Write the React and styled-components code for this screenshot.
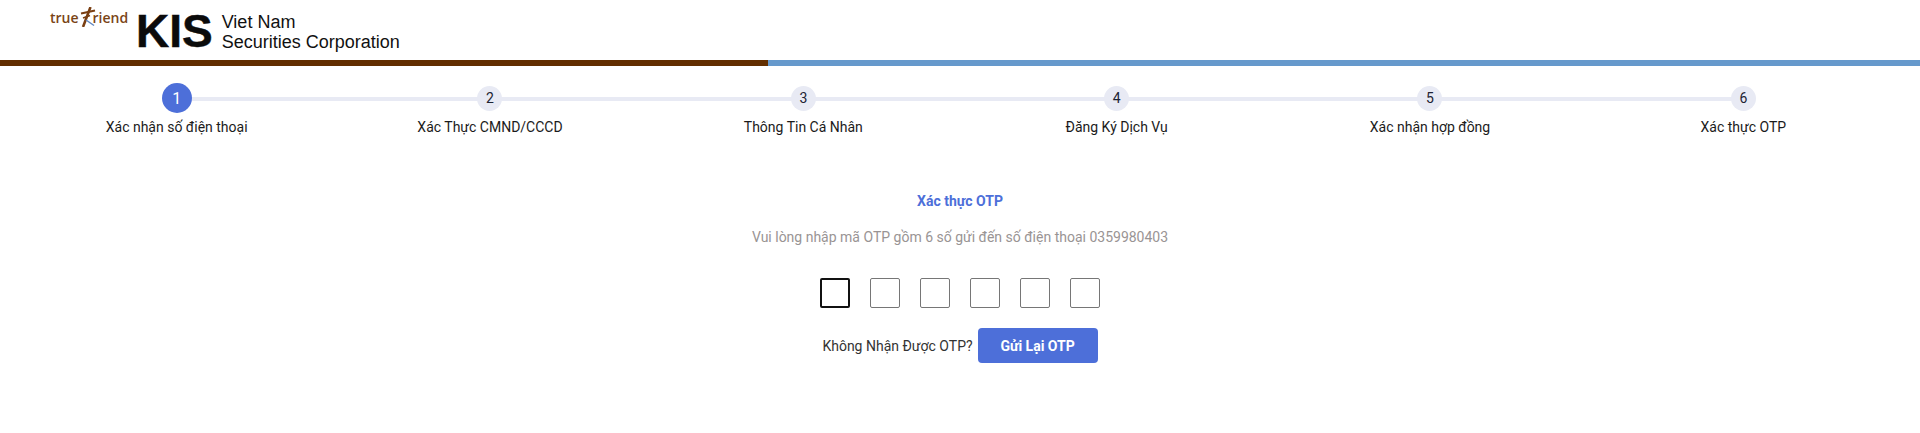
import React from "react";
import styled, { createGlobalStyle } from "styled-components";

const steps = [
  "Xác nhận số điện thoại",
  "Xác Thực CMND/CCCD",
  "Thông Tin Cá Nhân",
  "Đăng Ký Dịch Vụ",
  "Xác nhận hợp đồng",
  "Xác thực OTP",
];

const GlobalStyle = createGlobalStyle`
  html, body {
    margin: 0;
    padding: 0;
    background: #fff;
    font-family: Roboto, "Liberation Sans", sans-serif;
  }
`;

const Page = styled.div`
  width: 1920px;
  height: 433px;
  overflow: hidden;
`;

const Header = styled.header`
  height: 60px;
  display: flex;
  align-items: flex-start;
  padding-left: 50px;
  box-sizing: border-box;
`;

const TrueFriend = styled.div`
  display: flex;
  align-items: center;
  height: 20px;
  margin-top: 7px;
  width: 86px;
  font-family: "Open Sans", "Liberation Sans", sans-serif;
  font-size: 14px;
  font-weight: 600;
  color: #7a4416;
  white-space: nowrap;
`;

const FriendMark = styled.svg`
  width: 16px;
  height: 20px;
  margin: 0 -3px 0 1px;
  flex: none;
`;

const KisMark = styled.div`
  margin: 11px 0 0 0;
  font-family: "Liberation Sans", Arial, sans-serif;
  font-size: 46px;
  line-height: 40px;
  font-weight: 700;
  color: #0b0b0b;
  -webkit-text-stroke: 0.5px #0b0b0b;
`;

const CompanyName = styled.div`
  margin: 12px 0 0 9px;
  font-family: "Liberation Sans", Arial, sans-serif;
  font-size: 18px;
  line-height: 20px;
  color: #111;
  white-space: nowrap;
`;

const ProgressBar = styled.div`
  height: 6px;
  display: grid;
  grid-template-columns: 40% 60%;
`;

const ProgressPart = styled.div`
  background: ${(p) => p.$color};
`;

const Stepper = styled.ol`
  list-style: none;
  margin: 0;
  padding: 17px 20px 0;
  display: grid;
  grid-template-columns: repeat(6, 1fr);
`;

const Step = styled.li`
  position: relative;
  display: flex;
  flex-direction: column;
  align-items: center;
`;

const Line = styled.span`
  position: absolute;
  top: 14px;
  left: 50%;
  width: 100%;
  height: 4px;
  background: #e8eaf4;
`;

const CircleSlot = styled.div`
  position: relative;
  z-index: 1;
  height: 30px;
  display: flex;
  align-items: center;
  justify-content: center;
`;

const Circle = styled.span`
  width: ${(p) => (p.$active ? 30 : 25)}px;
  height: ${(p) => (p.$active ? 30 : 25)}px;
  border-radius: 50%;
  display: flex;
  align-items: center;
  justify-content: center;
  font-size: ${(p) => (p.$active ? 16 : 14)}px;
  color: ${(p) => (p.$active ? "#fff" : "#1c2333")};
  background: ${(p) => (p.$active ? "#4d6fd9" : "#e8eaf4")};
`;

const StepLabel = styled.span`
  margin-top: 4px;
  font-size: 14px;
  line-height: 20px;
  color: #1b1b1b;
`;

const Content = styled.main`
  display: flex;
  flex-direction: column;
  align-items: center;
  padding-top: 54px;
`;

const Title = styled.h1`
  margin: 0;
  font-size: 14px;
  line-height: 20px;
  font-weight: 700;
  color: #4d6fd9;
`;

const Hint = styled.p`
  margin: 16px 0 0;
  font-size: 14px;
  line-height: 20px;
  color: #999494;
`;

const OtpRow = styled.div`
  display: flex;
  gap: 20px;
  margin-top: 31px;
`;

const OtpBox = styled.input`
  width: 30px;
  height: 30px;
  padding: 0;
  box-sizing: border-box;
  border: ${(p) => (p.$focused ? "2px solid #111" : "1px solid #767676")};
  border-radius: 2px;
  background: #fff;
  outline: none;
`;

const ResendRow = styled.div`
  display: flex;
  align-items: center;
  gap: 5px;
  margin-top: 20px;
  font-size: 14px;
  color: #333;
`;

const ResendButton = styled.button`
  width: 120px;
  height: 35px;
  padding: 0;
  border: none;
  border-radius: 4px;
  background: #4d6fd9;
  color: #fff;
  font-family: inherit;
  font-size: 14px;
  font-weight: 700;
`;

export default function App() {
  return (
    <Page>
      <GlobalStyle />
      <Header>
        <TrueFriend>
          true
          <FriendMark viewBox="0 0 16 20">
            <path d="M10.5 0 L3 20" stroke="#7a3f12" strokeWidth="2.6" fill="none" />
            <path d="M1 6.5 L15 3.5" stroke="#7a3f12" strokeWidth="2" fill="none" />
            <path d="M3 11 L10 8.5" stroke="#7a3f12" strokeWidth="1.6" fill="none" />
            <path d="M6 13 L14 18.5" stroke="#5f86c0" strokeWidth="1.5" fill="none" />
          </FriendMark>
          riend
        </TrueFriend>
        <KisMark>KIS</KisMark>
        <CompanyName>
          Viet Nam
          <br />
          Securities Corporation
        </CompanyName>
      </Header>
      <ProgressBar>
        <ProgressPart $color="#622e00" />
        <ProgressPart $color="#6699cc" />
      </ProgressBar>
      <Stepper>
        {steps.map((label, i) => (
          <Step key={label}>
            {i < steps.length - 1 && <Line />}
            <CircleSlot>
              <Circle $active={i === 0}>{i + 1}</Circle>
            </CircleSlot>
            <StepLabel>{label}</StepLabel>
          </Step>
        ))}
      </Stepper>
      <Content>
        <Title>Xác thực OTP</Title>
        <Hint>Vui lòng nhập mã OTP gồm 6 số gửi đến số điện thoại 0359980403</Hint>
        <OtpRow>
          {[0, 1, 2, 3, 4, 5].map((n) => (
            <OtpBox key={n} $focused={n === 0} maxLength={1} readOnly />
          ))}
        </OtpRow>
        <ResendRow>
          Không Nhận Được OTP?
          <ResendButton>Gửi Lại OTP</ResendButton>
        </ResendRow>
      </Content>
    </Page>
  );
}
